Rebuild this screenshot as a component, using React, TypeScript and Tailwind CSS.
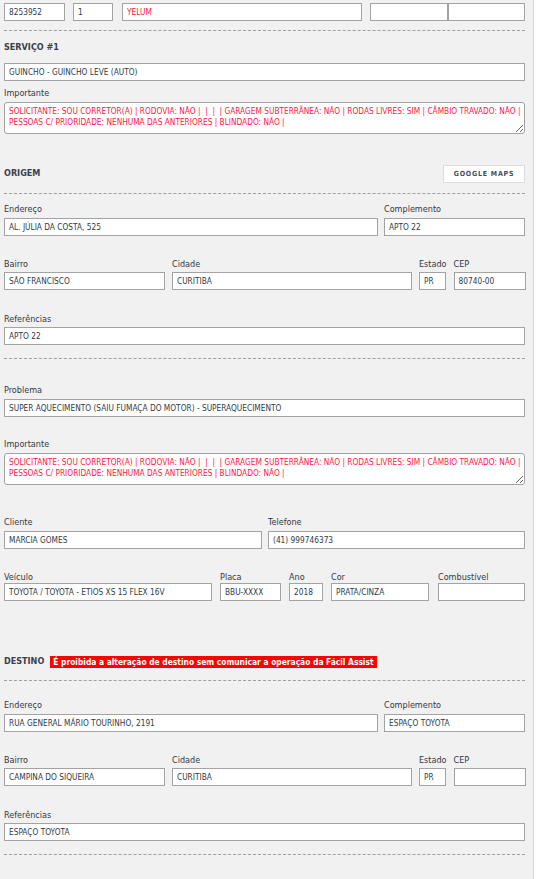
import React from "react";

const FONT = "font-['DejaVu_Sans_Condensed','DejaVu_Sans',sans-serif]";

const IMPORTANTE =
  "SOLICITANTE: SOU CORRETOR(A) | RODOVIA: NÃO |  |  |  | GARAGEM SUBTERRÂNEA: NÃO | RODAS LIVRES: SIM | CÂMBIO TRAVADO: NÃO |\nPESSOAS C/ PRIORIDADE: NENHUMA DAS ANTERIORES | BLINDADO: NÃO |";

function Input({ value = "", w, red = false }: { value?: string; w?: string; red?: boolean }) {
  return (
    <div
      className={`${w ?? "w-full"} h-[18px] shrink-0 flex items-center border border-[#a3a3a3] bg-white px-[4px] text-[8.25px] leading-[16px] whitespace-nowrap overflow-hidden ${
        red ? "text-[#ff1744]" : "text-[#2f3a48]"
      }`}
    >
      {value}
    </div>
  );
}

function Field({
  label,
  value,
  w,
  gap = "mb-[3px]",
  className = "",
}: {
  label: string;
  value?: string;
  w: string;
  gap?: string;
  className?: string;
}) {
  return (
    <div className={`flex flex-col ${className}`}>
      <label className={`h-[12px] text-[9px] leading-[12px] text-[#333844] whitespace-nowrap ${gap}`}>{label}</label>
      <Input value={value} w={w} />
    </div>
  );
}

function Dashed({ className = "" }: { className?: string }) {
  return <div className={`border-t border-dashed border-[#a0a0a0] ${className}`} />;
}

function Notes({ className = "" }: { className?: string }) {
  return (
    <div className={`flex flex-col ${className}`}>
      <label className="h-[12px] text-[9px] leading-[12px] text-[#333844] mb-[3px]">Importante</label>
      <textarea
        readOnly
        value={IMPORTANTE}
        className="block w-full h-[32px] rounded-[3px] border border-[#a3a3a3] bg-white px-[4px] pt-[3px] text-[8.25px] leading-[11px] text-[#ff1744] whitespace-pre overflow-hidden resize-y outline-none"
      />
    </div>
  );
}

function Heading({ children }: { children: React.ReactNode }) {
  return <span className="text-[9px] font-bold text-[#3a3f48] whitespace-nowrap">{children}</span>;
}

function AddressBlock({
  endereco,
  complemento,
  bairro,
  cidade,
  estado,
  cep,
  referencias,
}: {
  endereco: string;
  complemento: string;
  bairro: string;
  cidade: string;
  estado: string;
  cep: string;
  referencias: string;
}) {
  return (
    <>
      <div className="flex gap-[6px]">
        <Field label="Endereço" value={endereco} w="w-[374px]" />
        <Field label="Complemento" value={complemento} w="w-[141px]" />
      </div>
      <div className="flex gap-[7px] mt-[22px]">
        <Field label="Bairro" value={bairro} w="w-[161px]" gap="mb-[2px]" />
        <Field label="Cidade" value={cidade} w="w-[240px]" gap="mb-[2px]" />
        <Field label="Estado" value={estado} w="w-[27px]" gap="mb-[2px]" />
        <Field label="CEP" value={cep} w="w-[72px]" gap="mb-[2px]" />
      </div>
      <Field label="Referências" value={referencias} w="w-full" gap="mb-[2px]" className="mt-[23px]" />
    </>
  );
}

export default function App() {
  return (
    <div className={`min-h-screen bg-white ${FONT}`}>
      <div className="w-[534px] min-h-screen bg-[#f1f1f1] border-r border-[#d6d6d6] pl-[4px] pr-[8px] pt-[3px] pb-[20px]">
        {/* top row */}
        <div className="flex">
          <Input value="8253952" w="w-[61px]" />
          <div className="ml-[8px]">
            <Input value="1" w="w-[40px]" />
          </div>
          <div className="ml-[9px]">
            <Input value="YELUM" w="w-[240px]" red />
          </div>
          <div className="ml-[8px] flex">
            <Input w="w-[78px]" />
            <Input w="w-[77px]" />
          </div>
        </div>
        <Dashed className="mt-[9px]" />

        {/* serviço */}
        <div className="mt-[9px] h-[14px] leading-[14px] flex items-center">
          <Heading>SERVIÇO #1</Heading>
        </div>
        <div className="mt-[9px]">
          <Input value="GUINCHO - GUINCHO LEVE (AUTO)" />
        </div>
        <Notes className="mt-[6px]" />

        {/* origem */}
        <div className="mt-[31px] h-[18px] flex items-center justify-between">
          <Heading>ORIGEM</Heading>
          <button className="w-[82px] h-[18px] border border-[#dcdcdc] bg-white text-[7px] font-bold tracking-[0.8px] text-[#454c58]">
            GOOGLE MAPS
          </button>
        </div>
        <Dashed className="mt-[10px]" />
        <div className="mt-[9px]">
          <AddressBlock
            endereco="AL. JÚLIA DA COSTA, 525"
            complemento="APTO 22"
            bairro="SÃO FRANCISCO"
            cidade="CURITIBA"
            estado="PR"
            cep="80740-00"
            referencias="APTO 22"
          />
        </div>
        <Dashed className="mt-[13px]" />

        {/* problema */}
        <Field
          label="Problema"
          value="SUPER AQUECIMENTO (SAIU FUMAÇA DO MOTOR) - SUPERAQUECIMENTO"
          w="w-full"
          className="mt-[25px]"
        />
        <Notes className="mt-[21px]" />

        <div className="flex gap-[6px] mt-[31px]">
          <Field label="Cliente" value="MARCIA GOMES" w="w-[258px]" />
          <Field label="Telefone" value="(41) 999746373" w="w-[257px]" />
        </div>
        <div className="flex mt-[22px]">
          <Field label="Veículo" value="TOYOTA / TOYOTA - ETIOS XS 15 FLEX 16V" w="w-[208px]" gap="mb-0" />
          <Field label="Placa" value="BBU-XXXX" w="w-[61px]" gap="mb-0" className="ml-[8px]" />
          <Field label="Ano" value="2018" w="w-[34px]" gap="mb-0" className="ml-[8px]" />
          <Field label="Cor" value="PRATA/CINZA" w="w-[98px]" gap="mb-0" className="ml-[8px]" />
          <Field label="Combustível" value="" w="w-[87px]" gap="mb-0" className="ml-[9px]" />
        </div>

        {/* destino */}
        <div className="mt-[55px] h-[12px] flex items-center gap-[6px]">
          <Heading>DESTINO</Heading>
          <span className="h-[12px] bg-[#ff0000] px-[3px] text-[8.4px] leading-[12px] font-bold text-white whitespace-nowrap">
            É proibida a alteração de destino sem comunicar a operação da Fácil Assist
          </span>
        </div>
        <Dashed className="mt-[12px]" />
        <div className="mt-[18px]">
          <AddressBlock
            endereco="RUA GENERAL MÁRIO TOURINHO, 2191"
            complemento="ESPAÇO TOYOTA"
            bairro="CAMPINA DO SIQUEIRA"
            cidade="CURITIBA"
            estado="PR"
            cep=""
            referencias="ESPAÇO TOYOTA"
          />
        </div>
        <Dashed className="mt-[13px]" />
      </div>
    </div>
  );
}
